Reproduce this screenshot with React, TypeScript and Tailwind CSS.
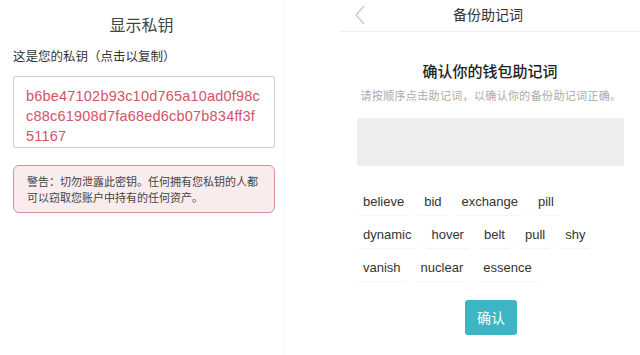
import React from "react";

const cjk = { fontFamily: '"Noto Sans", "Noto Sans CJK SC", sans-serif' };

const rows = [
  ["believe", "bid", "exchange", "pill"],
  ["dynamic", "hover", "belt", "pull", "shy"],
  ["vanish", "nuclear", "essence"],
];

function PrivateKey() {
  return (
    <div className="w-[284px] h-full border-r border-[#f6f6f6] flex flex-col">
      <div className="h-[48px] pt-[2px] flex items-center justify-center text-[16px] text-[#444]">显示私钥</div>
      <div className="px-[13px] text-[12.5px] text-[#333] leading-[18px]">这是您的私钥（点击以复制）</div>
      <div className="mx-[13px] mt-[10px] w-[262px] h-[72px] border border-[#cfcfcf] rounded-[2px] px-[12px] pt-[9px] text-[14.5px] tracking-[0.2px] leading-[20px] text-[#d25467] whitespace-nowrap" style={{ fontFamily: '"Liberation Sans", sans-serif' }}>
        <div>b6be47102b93c10d765a10ad0f98c</div>
        <div>c88c61908d7fa68ed6cb07b834ff3f</div>
        <div>51167</div>
      </div>
      <div className="mx-[13px] mt-[17px] w-[262px] h-[48px] bg-[#faeced] border border-[#e48e9d] rounded-[6px] px-[13px] pt-[8px] text-[11px] leading-[16px] text-[#444] whitespace-nowrap">
        <div>警告：切勿泄露此密钥。任何拥有您私钥的人都</div>
        <div>可以窃取您账户中持有的任何资产。</div>
      </div>
    </div>
  );
}

function Mnemonic() {
  return (
    <div className="ml-[56px] flex-1 h-full flex flex-col">
      <div className="h-[32px] border-b border-[#f0f0f0] flex items-start pt-[4px] relative">
        <svg className="absolute left-[14px] top-[5px]" width="12" height="20" viewBox="0 0 12 20">
          <path d="M10 1 L2 10 L10 19" fill="none" stroke="#c8c8c8" strokeWidth="1.3" />
        </svg>
        <div className="flex-1 text-center text-[14px] text-[#333] pr-[4px]">备份助记词</div>
      </div>
      <div className="mt-[28px] text-center text-[15px] font-medium text-[#222]">确认你的钱包助记词</div>
      <div className="mt-[5px] text-center text-[11px] tracking-[0.35px] text-[#aaa] pl-[2px]">请按顺序点击助记词，以确认你的备份助记词正确。</div>
      <div className="mt-[14px] ml-[17px] w-[267px] h-[48px] bg-[#eeeeee] rounded-[3px]"></div>
      <div className="mt-[23px] ml-[17px] flex flex-col gap-[7px]" style={{ fontFamily: '"Liberation Sans", sans-serif' }}>
        {rows.map((r, i) => (
          <div key={i} className="flex gap-[8px]">
            {r.map((w) => (
              <div key={w} className="h-[26px] px-[6px] flex items-center text-[13px] text-[#333] bg-white shadow-[0_1px_1px_rgba(0,0,0,0.04)] rounded-[2px]">
                {w}
              </div>
            ))}
          </div>
        ))}
      </div>
      <div className="mt-[19px] self-center ml-[2px] w-[52px] h-[35px] bg-[#3cb6c5] rounded-[3px] flex items-center justify-center text-[14px] text-white">确认</div>
    </div>
  );
}

export default function App() {
  return (
    <div className="w-[640px] h-[355px] bg-white flex overflow-hidden" style={cjk}>
      <PrivateKey />
      <Mnemonic />
    </div>
  );
}
